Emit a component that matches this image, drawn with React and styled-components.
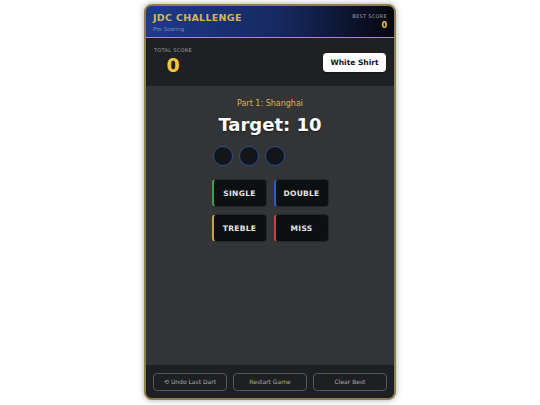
import React from 'react';
import styled, { createGlobalStyle } from 'styled-components';

const GlobalStyle = createGlobalStyle`
  html, body {
    margin: 0;
    padding: 0;
    background: #ffffff;
  }
  body {
    font-family: 'DejaVu Sans', 'Open Sans', sans-serif;
  }
`;

const Page = styled.div`
  width: 540px;
  height: 405px;
  display: flex;
  justify-content: center;
  padding-top: 4px;
  box-sizing: border-box;
`;

const Card = styled.div`
  width: 252px;
  height: 396px;
  box-sizing: border-box;
  border: 2px solid #8d7f4f;
  border-radius: 8px;
  overflow: hidden;
  display: flex;
  flex-direction: column;
  background: #333436;
  box-shadow: 0 0 6px rgba(0, 0, 0, 0.35);
`;

const Header = styled.header`
  height: 32px;
  box-sizing: border-box;
  display: flex;
  justify-content: space-between;
  align-items: center;
  padding: 0 7px 0 7px;
  background: linear-gradient(90deg, #1d3a8c 0%, #16285e 55%, #05070d 100%);
  border-bottom: 1px solid #b39a52;
`;

const Brand = styled.div`
  display: flex;
  flex-direction: column;
  gap: 3px;
`;

const Title = styled.h1`
  margin: 0;
  font-size: 9.5px;
  font-weight: 700;
  letter-spacing: 0.3px;
  color: #d8b558;
`;

const Subtitle = styled.span`
  font-size: 5.5px;
  color: #7d8fbf;
`;

const Best = styled.div`
  display: flex;
  flex-direction: column;
  align-items: flex-end;
  gap: 2px;
`;

const Label = styled.span`
  font-size: 5px;
  letter-spacing: 0.3px;
  color: #9a9da4;
`;

const BestValue = styled.span`
  font-size: 8px;
  font-weight: 700;
  color: #f2c640;
`;

const ScoreBar = styled.section`
  height: 48px;
  box-sizing: border-box;
  background: #1f2022;
  display: flex;
  justify-content: space-between;
  align-items: center;
  padding: 0 8px 0 8px;
`;

const Total = styled.div`
  display: flex;
  flex-direction: column;
  align-items: flex-start;
  gap: 3px;
  margin-top: -2px;
`;

const TotalValue = styled.span`
  align-self: center;
  font-size: 19px;
  font-weight: 700;
  line-height: 1;
  color: #f2c640;
`;

const ShirtButton = styled.button`
  font: inherit;
  font-size: 7.5px;
  font-weight: 700;
  color: #111;
  background: #ffffff;
  border: none;
  border-radius: 4px;
  height: 19px;
  width: 63px;
  padding: 0;
  box-shadow: 0 1px 2px rgba(0, 0, 0, 0.4);
`;

const Board = styled.main`
  flex: 1;
  display: flex;
  flex-direction: column;
  align-items: center;
  padding-top: 13px;
`;

const Stage = styled.div`
  font-size: 8px;
  color: #d8b558;
`;

const Target = styled.div`
  margin-top: 6px;
  font-size: 18px;
  font-weight: 700;
  color: #ffffff;
  text-shadow: 0 1px 2px rgba(0, 0, 0, 0.5);
`;

const Throws = styled.div`
  width: 117px;
  display: flex;
  flex-direction: column;
  align-items: flex-start;
  margin-top: 11px;
`;

const Darts = styled.div`
  display: flex;
  gap: 6px;
  margin-left: 1px;
`;

const Dart = styled.span`
  width: 18px;
  height: 18px;
  border-radius: 50%;
  background: #131519;
  border: 1.5px solid #2e4d92;
`;

const Pad = styled.div`
  display: grid;
  grid-template-columns: 55px 55px;
  gap: 7px;
  margin-top: 13px;
`;

const HitButton = styled.button`
  font: inherit;
  font-size: 7.5px;
  font-weight: 600;
  letter-spacing: 0.3px;
  color: #e6e6e6;
  background: #0e0f11;
  border: 1px solid #26272a;
  border-left: 2px solid ${(p) => p.$accent};
  border-radius: 4px;
  height: 28px;
  padding: 0;
`;

const Footer = styled.footer`
  height: 33px;
  box-sizing: border-box;
  background: #1e1f21;
  display: grid;
  grid-template-columns: repeat(3, 1fr);
  gap: 6px;
  align-items: center;
  padding: 0 7px;
`;

const FooterButton = styled.button`
  font: inherit;
  font-size: 6px;
  color: #a9abb0;
  background: transparent;
  border: 1px solid #55575c;
  border-radius: 4px;
  height: 18px;
  padding: 0;
`;

const hits = [
  { label: 'SINGLE', accent: '#2fa35a' },
  { label: 'DOUBLE', accent: '#2f5bc4' },
  { label: 'TREBLE', accent: '#c9a441' },
  { label: 'MISS', accent: '#c0443f' },
];

export default function App() {
  return (
    <>
      <GlobalStyle />
      <Page>
        <Card>
          <Header>
            <Brand>
              <Title>JDC CHALLENGE</Title>
              <Subtitle>Pro Scoring</Subtitle>
            </Brand>
            <Best>
              <Label>BEST SCORE</Label>
              <BestValue>0</BestValue>
            </Best>
          </Header>
          <ScoreBar>
            <Total>
              <Label>TOTAL SCORE</Label>
              <TotalValue>0</TotalValue>
            </Total>
            <ShirtButton>White Shirt</ShirtButton>
          </ScoreBar>
          <Board>
            <Stage>Part 1: Shanghai</Stage>
            <Target>Target: 10</Target>
            <Throws>
              <Darts>
                <Dart />
                <Dart />
                <Dart />
              </Darts>
              <Pad>
                {hits.map((h) => (
                  <HitButton key={h.label} $accent={h.accent}>
                    {h.label}
                  </HitButton>
                ))}
              </Pad>
            </Throws>
          </Board>
          <Footer>
            <FooterButton>⟲ Undo Last Dart</FooterButton>
            <FooterButton>Restart Game</FooterButton>
            <FooterButton>Clear Best</FooterButton>
          </Footer>
        </Card>
      </Page>
    </>
  );
}
